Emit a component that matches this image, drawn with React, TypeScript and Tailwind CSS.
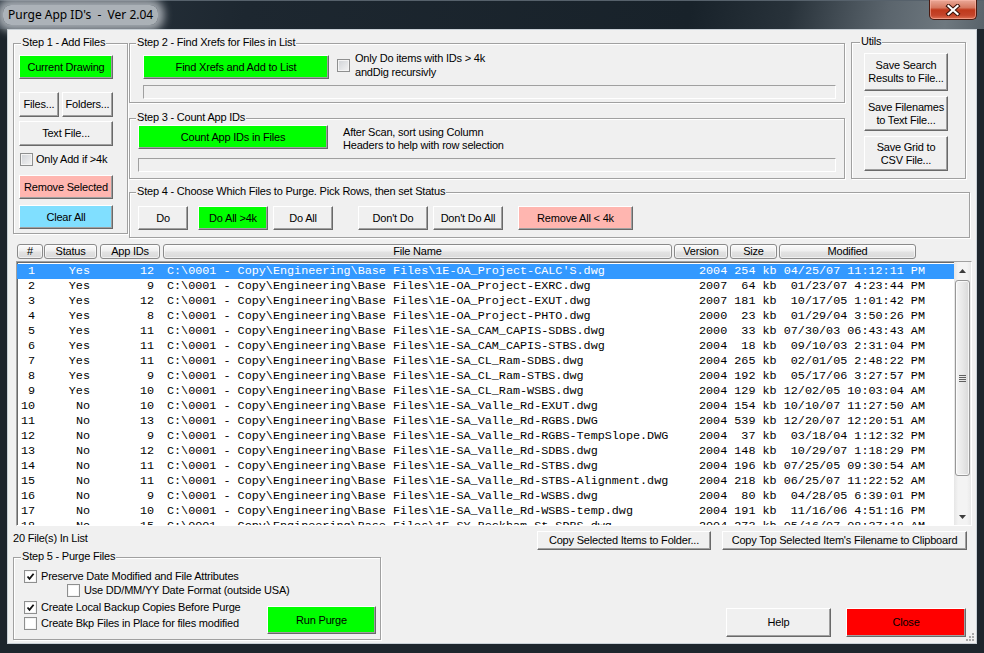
import React from "react";

const rows: [number, string, number, string, string, number, string][] = [
  [1, "Yes", 12, "1E-OA_Project-CALC'S.dwg", "2004", 254, "04/25/07 11:12:11 PM"],
  [2, "Yes", 9, "1E-OA_Project-EXRC.dwg", "2007", 64, "01/23/07 4:23:44 PM"],
  [3, "Yes", 12, "1E-OA_Project-EXUT.dwg", "2007", 181, "10/17/05 1:01:42 PM"],
  [4, "Yes", 8, "1E-OA_Project-PHTO.dwg", "2000", 23, "01/29/04 3:50:26 PM"],
  [5, "Yes", 11, "1E-SA_CAM_CAPIS-SDBS.dwg", "2000", 33, "07/30/03 06:43:43 AM"],
  [6, "Yes", 11, "1E-SA_CAM_CAPIS-STBS.dwg", "2004", 18, "09/10/03 2:31:04 PM"],
  [7, "Yes", 11, "1E-SA_CL_Ram-SDBS.dwg", "2004", 265, "02/01/05 2:48:22 PM"],
  [8, "Yes", 9, "1E-SA_CL_Ram-STBS.dwg", "2004", 192, "05/17/06 3:27:57 PM"],
  [9, "Yes", 10, "1E-SA_CL_Ram-WSBS.dwg", "2004", 129, "12/02/05 10:03:04 AM"],
  [10, "No", 10, "1E-SA_Valle_Rd-EXUT.dwg", "2004", 154, "10/10/07 11:27:50 AM"],
  [11, "No", 13, "1E-SA_Valle_Rd-RGBS.DWG", "2004", 539, "12/20/07 12:20:51 AM"],
  [12, "No", 9, "1E-SA_Valle_Rd-RGBS-TempSlope.DWG", "2004", 37, "03/18/04 1:12:32 PM"],
  [13, "No", 12, "1E-SA_Valle_Rd-SDBS.dwg", "2004", 148, "10/29/07 1:18:29 PM"],
  [14, "No", 11, "1E-SA_Valle_Rd-STBS.dwg", "2004", 196, "07/25/05 09:30:54 AM"],
  [15, "No", 11, "1E-SA_Valle_Rd-STBS-Alignment.dwg", "2004", 218, "06/25/07 11:22:52 AM"],
  [16, "No", 9, "1E-SA_Valle_Rd-WSBS.dwg", "2004", 80, "04/28/05 6:39:01 PM"],
  [17, "No", 10, "1E-SA_Valle_Rd-WSBS-temp.dwg", "2004", 191, "11/16/06 4:51:16 PM"],
  [18, "No", 15, "1E-SY_Beckham_St-SDBS.dwg", "2004", 273, "05/16/07 08:37:18 AM"],
]

const btnBase =
  "flex items-center justify-center text-center leading-[13px] border border-t-white border-l-white border-b-[#696969] border-r-[#696969] shadow-[inset_-1px_-1px_0_#a0a0a0]"

function Btn({ className, children }: { className: string; children: React.ReactNode }) {
  return <div className={btnBase + " " + className}>{children}</div>
}

function Group({
  title,
  className,
  titleClass,
  children,
}: {
  title: string
  className: string
  titleClass: string
  children?: React.ReactNode
}) {
  return (
    <div className={"border border-[#a0a0a0] shadow-[inset_1px_1px_0_#fff,1px_1px_0_#fff] " + className}>
      <div className={"-mt-[8px] w-fit px-[1px] bg-[#f0f0f0] leading-[13px] " + titleClass}>{title}</div>
      {children}
    </div>
  )
}

function Check({ checked, white }: { checked?: boolean; white?: boolean }) {
  return (
    <span
      className={
        "w-[13px] h-[13px] shrink-0 flex items-center justify-center border border-[#8e8f8f] shadow-[inset_0_0_0_1px_#f4f4f4] " +
        (white ? "bg-white" : "bg-[linear-gradient(135deg,#cfd2d6,#f4f4f4)]")
      }
    >
      {checked && (
        <svg width="9" height="9" viewBox="0 0 9 9">
          <path d="M1.5 4.5 L3.5 6.8 L7.6 1.8" stroke="#111" strokeWidth="1.8" fill="none" />
        </svg>
      )}
    </span>
  )
}

function Header({ className, children }: { className: string; children?: React.ReactNode }) {
  return (
    <div
      className={
        "h-[15px] flex items-center justify-center leading-none border border-[#8a8a8a] rounded-[3px] bg-[linear-gradient(#fbfbfb,#efefef_45%,#e2e2e2_55%,#d9d9d9)] shadow-[inset_0_0_0_1px_rgba(255,255,255,0.6)] " +
        className
      }
    >
      {children}
    </div>
  )
}

function Progress({ className }: { className: string }) {
  return <div className={"h-[14px] border border-t-[#a0a0a0] border-l-[#a0a0a0] border-b-white border-r-white " + className} />
}

export default function App() {
  return (
    <div className="w-[984px] h-[653px] overflow-hidden whitespace-nowrap bg-[#1d252c] flex flex-col font-['Liberation_Sans',Arial,sans-serif] text-[11px] tracking-[-0.2px] text-black">
      {/* title bar */}
      <div className="relative h-[29px] shrink-0 flex items-center border-t border-[#56616b] bg-[linear-gradient(100deg,#2c3741_0%,#1d2730_25%,#18222a_70%,#28323a_80%,#5b656d_90%,#6e787f_96%,#58626a_100%)]">
        <span className="ml-[3px] px-[5px] py-[1px] rounded-[8px] bg-[rgba(205,210,215,0.8)] shadow-[0_0_8px_6px_rgba(205,210,215,0.75)] font-['Noto_Sans',sans-serif] text-[12px] tracking-normal whitespace-pre">
          Purge App ID's  -  Ver 2.04
        </span>
        <div className="absolute -top-[1px] right-[7px] w-[48px] h-[20px] rounded-b-[5px] border border-t-0 border-[#4a1a10] bg-[linear-gradient(#eaa998,#d67860_40%,#c0391c_52%,#c4442a_80%,#dd6f52)] shadow-[inset_0_0_0_1px_rgba(255,190,175,0.55)] flex items-center justify-center">
          <svg width="16" height="12" viewBox="0 0 16 12">
            <path d="M3.5 2 L12.5 10 M12.5 2 L3.5 10" stroke="#3a1209" strokeWidth="4.2" strokeLinecap="square" />
            <path d="M3.5 2 L12.5 10 M12.5 2 L3.5 10" stroke="#fff" strokeWidth="2.2" strokeLinecap="square" />
          </svg>
        </div>
      </div>

      {/* client area */}
      <div className="relative ml-[7px] w-[970px] h-[615px] shrink-0 border border-[#c9d0d6] bg-[#f0f0f0] flex flex-col">
        <div className="ml-[5px] mt-[12px] grid grid-cols-[115px_717px_118px] grid-rows-[137px_46px] gap-y-[13px]">
          {/* Step 1 */}
          <Group title="Step 1 - Add Files" titleClass="ml-[7px]" className="row-span-2 mt-[1px] h-[191px] self-start flex flex-col">
            <Btn className="ml-[5px] mt-[6px] w-[94px] h-[24px] bg-[#00ff00]">Current Drawing</Btn>
            <div className="ml-[5px] mt-[13px] flex gap-[3px]">
              <Btn className="w-[40px] h-[25px] bg-[#f0f0f0]">Files...</Btn>
              <Btn className="w-[51px] h-[25px] bg-[#f0f0f0]">Folders...</Btn>
            </div>
            <Btn className="ml-[5px] mt-[4px] w-[94px] h-[25px] bg-[#f0f0f0]">Text File...</Btn>
            <div className="ml-[6px] mt-[7px] flex items-center gap-[3px] leading-[13px]">
              <Check />
              <span>Only Add if &gt;4k</span>
            </div>
            <Btn className="ml-[5px] mt-[9px] w-[94px] h-[24px] bg-[#ffb6b0]">Remove Selected</Btn>
            <Btn className="ml-[5px] mt-[6px] w-[94px] h-[24px] bg-[#80dfff]">Clear All</Btn>
          </Group>

          {/* Steps 2 and 3 */}
          <div className="col-start-2 ml-[1px] flex flex-col">
            <Group title="Step 2 - Find Xrefs for Files in List" titleClass="ml-[6px]" className="mt-[1px] h-[60px] flex flex-col">
              <div className="mt-[6px] flex items-start">
                <Btn className="ml-[13px] w-[186px] h-[24px] bg-[#00ff00]">Find Xrefs and Add to List</Btn>
                <div className="ml-[8px] mt-[4px]">
                  <Check />
                </div>
                <div className="ml-[5px] -mt-[4px] leading-[14px]">
                  <div>Only Do items with IDs &gt; 4k</div>
                  <div>andDig recursivly</div>
                </div>
              </div>
              <Progress className="ml-[13px] mt-[6px] w-[693px]" />
            </Group>
            <Group title="Step 3 - Count App IDs" titleClass="ml-[6px]" className="mt-[15px] h-[61px] flex flex-col">
              <div className="mt-[1px] flex items-start">
                <Btn className="ml-[8px] w-[190px] h-[24px] bg-[#00ff00]">Count App IDs in Files</Btn>
                <div className="ml-[15px] mt-[1px] leading-[13px]">
                  <div>After Scan, sort using Column</div>
                  <div>Headers to help with row selection</div>
                </div>
              </div>
              <Progress className="ml-[8px] mt-[6px] w-[698px]" />
            </Group>
          </div>

          {/* Utils */}
          <Group title="Utils" titleClass="ml-[8px]" className="col-start-3 ml-[6px] w-[115px] h-[137px] flex flex-col">
            <Btn className="ml-[12px] mt-[5px] w-[84px] h-[38px] bg-[#f0f0f0]">
              Save Search
              <br />
              Results to File...
            </Btn>
            <Btn className="ml-[12px] mt-[5px] w-[84px] h-[35px] bg-[#f0f0f0]">
              Save Filenames
              <br />
              to Text File...
            </Btn>
            <Btn className="ml-[12px] mt-[5px] w-[84px] h-[35px] bg-[#f0f0f0]">
              Save Grid to
              <br />
              CSV File...
            </Btn>
          </Group>

          {/* Step 4 */}
          <Group
            title="Step 4 - Choose Which Files to Purge. Pick Rows, then set Status"
            titleClass="ml-[6px]"
            className="col-start-2 col-span-2 row-start-2 ml-[1px] w-[841px] h-[46px] flex flex-col"
          >
            <div className="mt-[8px] flex">
              <Btn className="ml-[8px] w-[50px] h-[24px] bg-[#f0f0f0]">Do</Btn>
              <Btn className="ml-[10px] w-[70px] h-[24px] bg-[#00ff00]">Do All &gt;4k</Btn>
              <Btn className="ml-[5px] w-[60px] h-[24px] bg-[#f0f0f0]">Do All</Btn>
              <Btn className="ml-[25px] w-[70px] h-[24px] bg-[#f0f0f0]">Don't Do</Btn>
              <Btn className="ml-[5px] w-[70px] h-[24px] bg-[#f0f0f0]">Don't Do All</Btn>
              <Btn className="ml-[15px] w-[115px] h-[24px] bg-[#ffb6b0]">Remove All &lt; 4k</Btn>
            </div>
          </Group>
        </div>

        {/* column headers */}
        <div className="ml-[9px] mt-[6px] flex">
          <Header className="w-[26px]">#</Header>
          <Header className="ml-[1px] w-[53px]">Status</Header>
          <Header className="ml-[3px] w-[60px]">App IDs</Header>
          <Header className="ml-[3px] w-[509px]">File Name</Header>
          <Header className="ml-[2px] w-[54px]">Version</Header>
          <Header className="ml-[2px] w-[47px]">Size</Header>
          <Header className="ml-[2px] w-[137px]">Modified</Header>
        </div>

        {/* list */}
        <div className="ml-[8px] mt-[2px] w-[956px] h-[265px] flex border border-[#a0a0a0] border-b-white border-r-white shadow-[inset_1px_1px_0_#696969] bg-white">
          <div className="flex-1 pt-[2px] overflow-hidden font-['Liberation_Mono',monospace] text-[11.77px] tracking-normal">
            {rows.map(([n, st, ids, file, ver, size, date]) => (
              <div
                key={n}
                className={"flex h-[15px] leading-[15px] whitespace-pre " + (n === 1 ? "bg-[#3399ff] text-white" : "text-black")}
              >
                <span className="w-[18px] text-right">{n}</span>
                <span className="w-[55px] text-right">{st}</span>
                <span className="w-[64px] text-right">{ids}</span>
                <span className="w-[545px] pl-[13px] overflow-hidden">{"C:\\0001 - Copy\\Engineering\\Base Files\\" + file}</span>
                <span>{ver + " " + String(size).padStart(3) + " kb " + date.padStart(20)}</span>
              </div>
            ))}
          </div>
          {/* scrollbar */}
          <div className="w-[17px] flex flex-col bg-[linear-gradient(90deg,#e6e6e6,#f3f3f3_25%,#f3f3f3_75%,#e9e9e9)]">
            <div className="h-[17px] flex items-center justify-center">
              <svg width="7" height="4" viewBox="0 0 7 4">
                <path d="M0 4 L3.5 0 L7 4Z" fill="#3c3c3c" />
              </svg>
            </div>
            <div className="mt-[1px] mx-[1px] h-[196px] rounded-[3px] border border-[#979797] bg-[linear-gradient(90deg,#f4f4f4,#e8e8e8_50%,#d9d9d9)] shadow-[inset_0_0_0_1px_rgba(255,255,255,0.7)] flex flex-col items-center justify-center gap-[1px]">
              <div className="w-[7px] h-[1px] bg-[#5f5f5f]" />
              <div className="w-[7px] h-[1px] bg-[#5f5f5f]" />
              <div className="w-[7px] h-[1px] bg-[#5f5f5f]" />
              <div className="w-[7px] h-[1px] bg-[#5f5f5f]" />
            </div>
            <div className="flex-1" />
            <div className="h-[17px] flex items-center justify-center">
              <svg width="7" height="4" viewBox="0 0 7 4">
                <path d="M0 0 L3.5 4 L7 0Z" fill="#3c3c3c" />
              </svg>
            </div>
          </div>
        </div>

        {/* status row */}
        <div className="mt-[5px] flex items-start">
          <span className="ml-[5px] mt-[1px] leading-[13px]">20 File(s) In List</span>
          <Btn className="ml-auto w-[174px] h-[19px] bg-[#f0f0f0]">Copy Selected Items to Folder...</Btn>
          <Btn className="ml-[11px] mr-[9px] w-[245px] h-[19px] bg-[#f0f0f0]">Copy Top Selected Item's Filename to Clipboard</Btn>
        </div>

        {/* bottom row */}
        <div className="mt-[7px] flex items-start">
          <Group title="Step 5 - Purge Files" titleClass="ml-[7px]" className="ml-[5px] w-[368px] h-[83px] flex flex-col leading-[13px]">
            <div className="ml-[10px] mt-[7px] flex items-center gap-[4px]">
              <Check checked white />
              <span>Preserve Date Modified and File Attributes</span>
            </div>
            <div className="ml-[53px] mt-[1px] flex items-center gap-[4px]">
              <Check white />
              <span>Use DD/MM/YY Date Format (outside USA)</span>
            </div>
            <div className="mt-[4px] flex items-start">
              <div className="ml-[10px] flex flex-col">
                <div className="flex items-center gap-[4px]">
                  <Check checked white />
                  <span>Create Local Backup Copies Before Purge</span>
                </div>
                <div className="mt-[3px] flex items-center gap-[4px]">
                  <Check white />
                  <span>Create Bkp Files in Place for files modified</span>
                </div>
              </div>
              <Btn className="ml-auto mr-[4px] mt-[5px] w-[109px] h-[28px] shrink-0 bg-[#00ff00]">Run Purge</Btn>
            </div>
          </Group>
          <Btn className="ml-auto mt-[51px] w-[105px] h-[29px] bg-[#f0f0f0]">Help</Btn>
          <Btn className="ml-[15px] mr-[10px] mt-[51px] w-[120px] h-[29px] bg-[#ff0000]">Close</Btn>
        </div>

        {/* size grip */}
        <svg className="absolute right-[1px] bottom-[1px]" width="10" height="10" viewBox="0 0 10 10">
          <rect x="7" y="1" width="2" height="2" fill="#a8a8a8" />
          <rect x="4" y="4" width="2" height="2" fill="#a8a8a8" />
          <rect x="7" y="4" width="2" height="2" fill="#a8a8a8" />
          <rect x="1" y="7" width="2" height="2" fill="#a8a8a8" />
          <rect x="4" y="7" width="2" height="2" fill="#a8a8a8" />
          <rect x="7" y="7" width="2" height="2" fill="#a8a8a8" />
        </svg>
      </div>
    </div>
  )
}
